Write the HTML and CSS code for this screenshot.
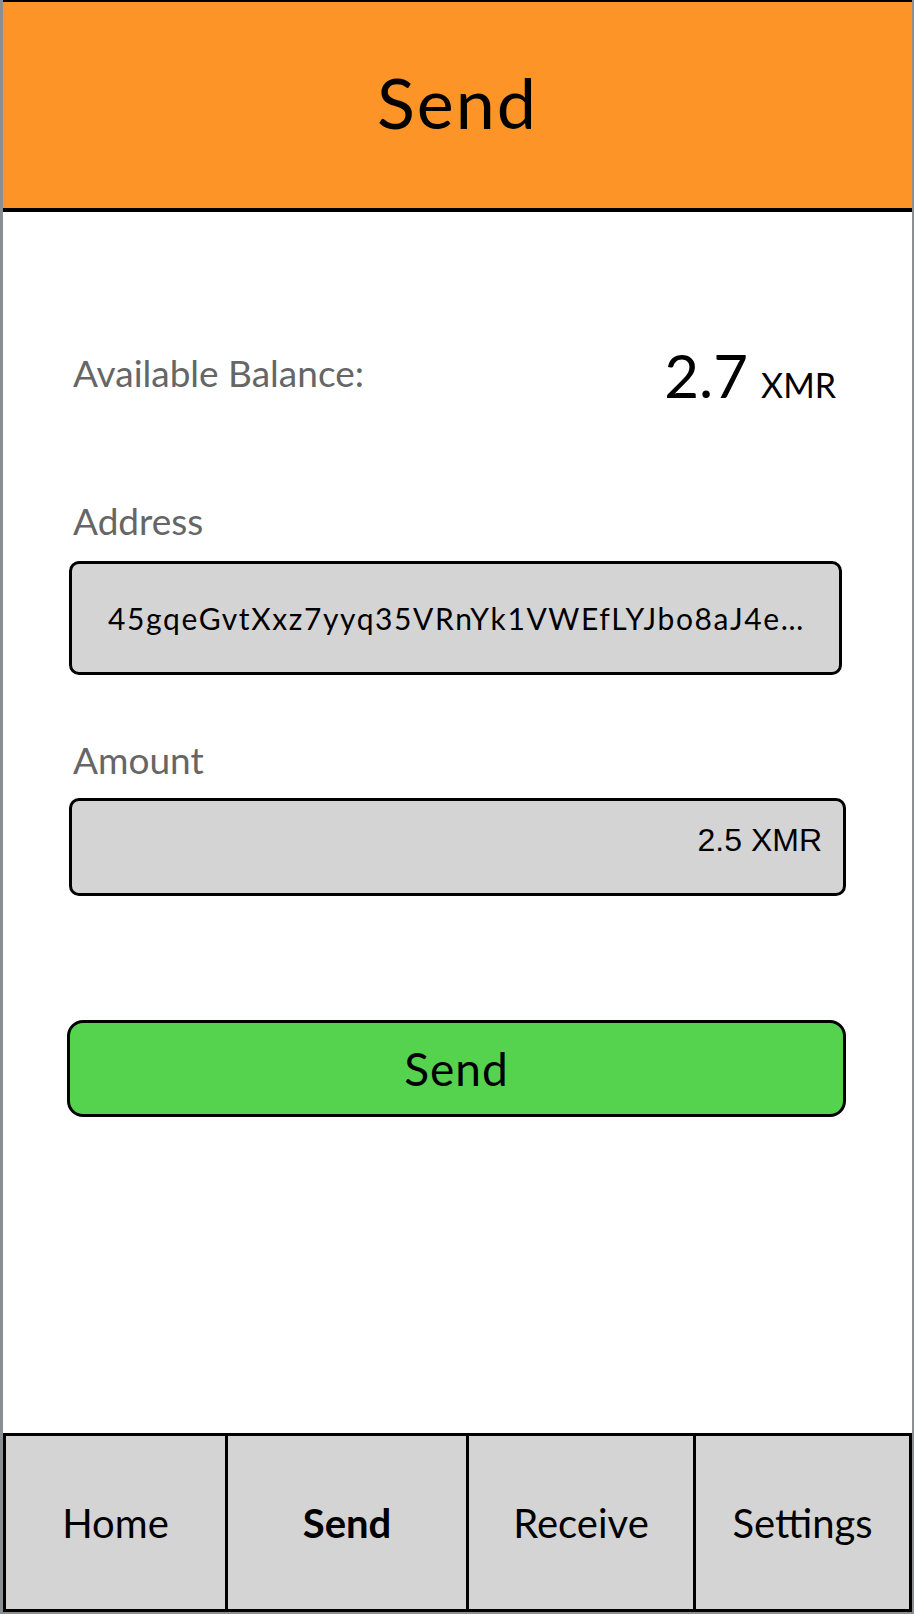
FILE: index.html
```html
<!DOCTYPE html>
<html>
<head>
<meta charset="utf-8">
<title>Send</title>
<link rel="stylesheet" href="styles.css">
</head>
<body>
<div class="frame">
  <header class="topbar">
    <h1 class="title">Send</h1>
  </header>
  <main class="content">
    <div class="balance">
      <span class="balance-label">Available Balance:</span>
      <span class="balance-value"><span class="num">2.7</span><span class="unit">XMR</span></span>
    </div>
    <div class="field-label addr-label">Address</div>
    <div class="field addr-field">45gqeGvtXxz7yyq35VRnYk1VWEfLYJbo8aJ4e…</div>
    <div class="field-label amt-label">Amount</div>
    <div class="field amt-field">2.5 XMR</div>
    <button class="send-btn">Send</button>
  </main>
  <nav class="tabbar">
    <div class="tab">Home</div>
    <div class="tab active">Send</div>
    <div class="tab">Receive</div>
    <div class="tab">Settings</div>
  </nav>
</div>
</body>
</html>
```
FILE: styles.css
```css
html, body {
  margin: 0;
  padding: 0;
  background: #ffffff;
}
.frame {
  width: 914px;
  height: 1614px;
  box-sizing: border-box;
  border-left: 3px solid #8a8f94;
  border-right: 2px solid #8a8f94;
  border-bottom: 2px solid #8a8f94;
  display: flex;
  flex-direction: column;
  font-family: "Lato", "Liberation Sans", sans-serif;
  color: #000;
}
.topbar {
  height: 212px;
  box-sizing: border-box;
  background: #fd9428;
  border-top: 2px solid #000;
  border-bottom: 4px solid #000;
  padding-bottom: 6px;
  display: flex;
  align-items: center;
  justify-content: center;
}
.title {
  margin: 0;
  font-size: 70px;
  font-weight: 400;
  letter-spacing: 2px;
  line-height: 1;
}
.content {
  flex: 1;
  padding: 0 66px 0 66px;
  display: flex;
  flex-direction: column;
}
.balance {
  margin-top: 130px;
  height: 64px;
  display: flex;
  align-items: flex-start;
  justify-content: space-between;
  padding: 0 10px 0 4px;
}
.balance-label {
  margin-top: 9px;
  font-size: 37px;
  color: #666666;
  line-height: 44px;
}
.balance-value {
  margin-top: 3px;
  line-height: 60px;
  display: flex;
  align-items: baseline;
  gap: 13px;
}
.num {
  font-size: 60px;
}
.unit {
  font-size: 34px;
}
.field-label {
  font-size: 37px;
  line-height: 44px;
  color: #666666;
  padding-left: 4px;
}
.addr-label {
  margin-top: 93px;
}
.amt-label {
  margin-top: 63px;
}
.field {
  box-sizing: border-box;
  background: #d4d4d4;
  border: 3px solid #000;
  border-radius: 10px;
  display: flex;
  align-items: center;
}
.addr-field {
  margin-top: 18px;
  margin-right: 4px;
  height: 114px;
  padding-left: 36px;
  font-size: 30px;
  letter-spacing: 1.6px;
  white-space: nowrap;
}
.amt-field {
  margin-top: 16px;
  height: 98px;
  justify-content: flex-end;
  padding-right: 21px;
  padding-bottom: 14px;
  font-family: "Liberation Sans", Arial, sans-serif;
  font-size: 32px;
}
.send-btn {
  margin: 124px 0 0 -2px;
  height: 97px;
  box-sizing: border-box;
  background: #55d34e;
  border: 3px solid #000;
  border-radius: 16px;
  font-family: "Lato", "Liberation Sans", sans-serif;
  font-size: 46px;
  letter-spacing: 1px;
  color: #000;
  padding: 0;
}
.tabbar {
  height: 179px;
  box-sizing: border-box;
  border: 3px solid #000;
  background: #d4d4d4;
  display: grid;
  grid-template-columns: 219px 241px 227px 1fr;
}
.tab {
  display: flex;
  align-items: center;
  justify-content: center;
  font-size: 40px;
}
.tab + .tab {
  border-left: 3px solid #000;
}
.tab.active {
  font-weight: 700;
}
```
